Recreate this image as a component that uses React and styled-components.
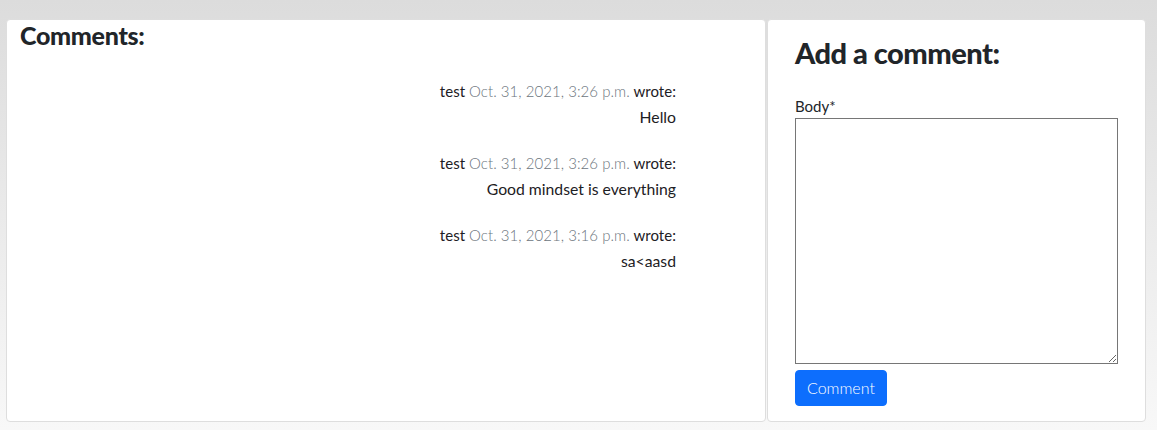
import React from 'react'
import styled, { createGlobalStyle } from 'styled-components'

const GlobalStyle = createGlobalStyle`
  html, body {
    margin: 0;
    padding: 0;
  }
  body {
    font-family: Lato, "Noto Sans", sans-serif;
    font-weight: 300;
    color: #212529;
    background: linear-gradient(to bottom, #dcdcdc 0%, #f8f8f8 100%);
    min-height: 430px;
  }
`;

const comments = [
    { name: 'test', date: 'Oct. 31, 2021, 3:26 p.m.', body: 'Hello' },
    { name: 'test', date: 'Oct. 31, 2021, 3:26 p.m.', body: 'Good mindset is everything' },
    { name: 'test', date: 'Oct. 31, 2021, 3:16 p.m.', body: 'sa<aasd' },
];

export default function App () {
  return (
    <>
      <GlobalStyle/>
      <Page>
        <Card>
          <CommentsTitle>Comments:</CommentsTitle>
          <CommentList>
            {comments.map((c, i) => (
              <Comment key={i}>
                <Meta>
                  {c.name} <DateText>{c.date}</DateText> wrote:
                </Meta>
                <Body>{c.body}</Body>
              </Comment>
            ))}
          </CommentList>
        </Card>
        <Card $form>
          <FormTitle>Add a comment:</FormTitle>
          <Form onSubmit={e => e.preventDefault()}>
            <Label htmlFor="id_body">Body*</Label>
            <TextArea id="id_body"/>
            <Button type="submit">Comment</Button>
          </Form>
        </Card>
      </Page>
    </>
  )
}

const Page = styled.div`
  display: grid;
  grid-template-columns: 760px 379px;
  gap: 1px;
  padding: 19px 12px 8px 6px;
  height: 430px;
  box-sizing: border-box;
`;

const Card = styled.div`
  background: #fff;
  border: 1px solid #dedede;
  border-radius: 4px;
  box-sizing: border-box;
  padding: ${p => p.$form ? '0 27px 0 27px' : '0 13px'};
  display: flex;
  flex-direction: column;
`;

const CommentsTitle = styled.h3`
  font-family: Lato, sans-serif;
  font-weight: 900;
  font-size: 25px;
  line-height: 30px;
  margin: 0;
  letter-spacing: -0.3px;
`;

const CommentList = styled.div`
  display: flex;
  flex-direction: column;
  gap: 22px;
  padding-right: 76px;
  margin-top: 29px;
  text-align: right;
`;

const Comment = styled.div`
  display: flex;
  flex-direction: column;
  gap: 2px;
  font-size: 15px;
  line-height: 24px;
  font-weight: 400;
  color: #1d2024;
`;

const Meta = styled.p`
  margin: 0;
  letter-spacing: 0.05px;
`;

const DateText = styled.span`
  color: #6c757d;
  font-weight: 300;
`;

const Body = styled.p`
  margin: 0;
  font-size: 15.75px;
`;

const FormTitle = styled.h3`
  font-family: Lato, sans-serif;
  font-weight: 900;
  font-size: 29px;
  line-height: 36px;
  margin: 15px 0 0;
  letter-spacing: -0.5px;
`;

const Form = styled.form`
  display: flex;
  flex-direction: column;
  align-items: flex-start;
  margin-top: 26px;
`;

const Label = styled.label`
  font-size: 15px;
  line-height: 18px;
  font-weight: 400;
  margin-bottom: 3px;
`;

const TextArea = styled.textarea`
  width: 323px;
  height: 246px;
  box-sizing: border-box;
  border: 1px solid #767676;
  border-radius: 0;
  margin: 0;
  font-family: inherit;
`;

const Button = styled.button`
  margin-top: 6px;
  background: #0d6efd;
  color: #fff;
  border: 1px solid #0d6efd;
  border-radius: 4px;
  font-family: Lato, sans-serif;
  font-weight: 300;
  font-size: 16px;
  line-height: 24px;
  padding: 5px 11px;
  cursor: pointer;
`;
